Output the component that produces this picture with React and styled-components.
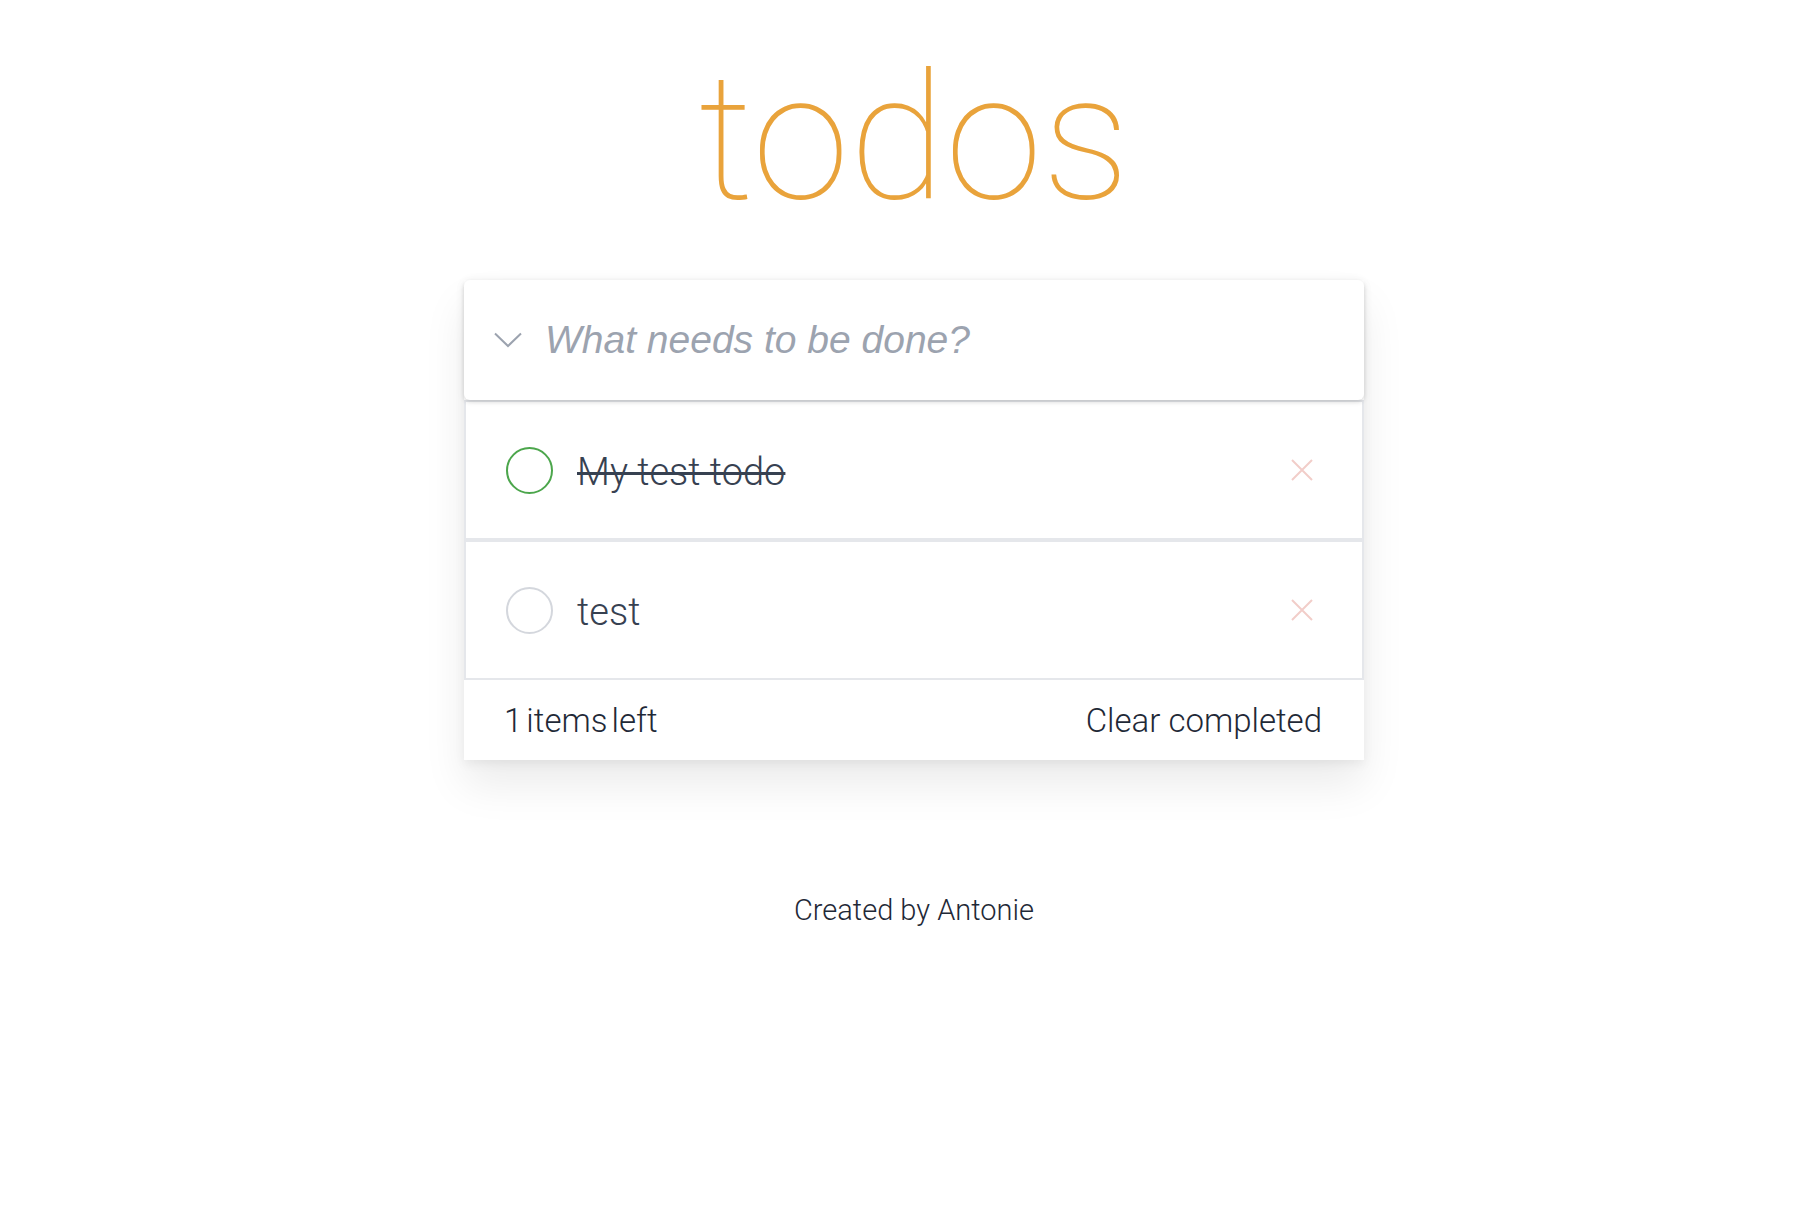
import React, { useState } from 'react';
import styled, { createGlobalStyle } from 'styled-components';

const GlobalStyle = createGlobalStyle`
  html, body {
    margin: 0;
    padding: 0;
    background: #ffffff;
  }

  body {
    font-family: Roboto, "Liberation Sans", sans-serif;
    font-weight: 300;
    color: #374151;
  }
`;

const Page = styled.div`
  display: flex;
  flex-direction: column;
  align-items: center;
  padding-left: 24px;
`;

const Title = styled.h1`
  margin: 50px 0 0;
  font-size: 176px;
  line-height: 1;
  font-weight: 100;
  color: #e9a33b;
`;

const Card = styled.section`
  width: 900px;
  margin-top: 54px;
  box-shadow: 0 4px 10px rgba(0, 0, 0, 0.06), 0 25px 40px rgba(0, 0, 0, 0.08);
`;

const Header = styled.div`
  position: relative;
  z-index: 1;
  display: flex;
  align-items: center;
  height: 120px;
  padding: 0 0 0 30px;
  background: #fff;
  border-radius: 6px;
  box-shadow: 0 2px 4px rgba(0, 0, 0, 0.14), 0 0 12px rgba(0, 0, 0, 0.04);
`;

const ToggleAll = styled.button`
  display: flex;
  align-items: center;
  padding: 0;
  margin-right: 21px;
  background: none;
  border: none;
  cursor: pointer;
`;

const NewTodo = styled.input`
  flex: 1;
  border: none;
  outline: none;
  background: transparent;
  font-family: "Liberation Sans", Arial, sans-serif;
  font-size: 39px;
  font-style: italic;
  font-weight: 400;
  color: #374151;

  &::placeholder {
    color: #9ca3af;
  }
`;

const List = styled.ul`
  list-style: none;
  margin: 0;
  padding: 0;
`;

const Item = styled.li`
  display: flex;
  align-items: center;
  box-sizing: border-box;
  height: 140px;
  padding: 0 49px 0 40px;
  background: #fff;
  border: 2px solid #e5e7eb;
`;

const Check = styled.button`
  box-sizing: border-box;
  width: 47px;
  height: 47px;
  padding: 0;
  border-radius: 50%;
  border: 2px solid ${(p) => (p.$done ? '#4ca64c' : '#d4d7dd')};
  background: #fff;
  cursor: pointer;
  flex-shrink: 0;
`;

const Label = styled.span`
  flex: 1;
  margin-left: 24px;
  padding-top: 4px;
  font-size: 38px;
  font-weight: 300;
  color: #374151;
  text-decoration: ${(p) => (p.$done ? 'line-through' : 'none')};
  text-decoration-thickness: 3px;
`;

const Destroy = styled.button`
  display: flex;
  padding: 0;
  background: none;
  border: none;
  cursor: pointer;
`;

const Footer = styled.footer`
  display: flex;
  align-items: center;
  justify-content: space-between;
  height: 80px;
  padding: 0 42px 0 40px;
  background: #fff;
  font-size: 33px;
  color: #1f2937;
`;

const Count = styled.span`
  word-spacing: -4px;
`;

const ClearButton = styled.button`
  padding: 0;
  background: none;
  border: none;
  font-family: inherit;
  font-size: inherit;
  font-weight: 300;
  color: inherit;
  cursor: pointer;
`;

const Credit = styled.p`
  margin: 133px 0 0;
  font-size: 29px;
  line-height: 1.2;
  color: #1f2937;
`;

const Chevron = () => (
  <svg width="28" height="16" viewBox="0 0 28 16" fill="none">
    <polyline points="1,1.5 14,14 27,1.5" stroke="#9ca3af" strokeWidth="2" />
  </svg>
);

const Cross = () => (
  <svg width="22" height="22" viewBox="0 0 22 22" fill="none">
    <path d="M1 1 L21 21 M21 1 L1 21" stroke="#f2cdc9" strokeWidth="2" />
  </svg>
);

const App = () => {
  const [todos, setTodos] = useState([
    { id: 1, text: 'My test todo', done: true },
    { id: 2, text: 'test', done: false },
  ]);
  const [draft, setDraft] = useState('');

  const toggle = (id) =>
    setTodos(todos.map((t) => (t.id === id ? { ...t, done: !t.done } : t)));
  const remove = (id) => setTodos(todos.filter((t) => t.id !== id));
  const left = todos.filter((t) => !t.done).length;

  return (
    <>
      <GlobalStyle />
      <Page>
        <Title>todos</Title>
        <Card>
          <Header>
            <ToggleAll aria-label="Toggle all">
              <Chevron />
            </ToggleAll>
            <NewTodo
              placeholder="What needs to be done?"
              value={draft}
              onChange={(e) => setDraft(e.target.value)}
            />
          </Header>
          <List>
            {todos.map((todo) => (
              <Item key={todo.id}>
                <Check $done={todo.done} onClick={() => toggle(todo.id)} />
                <Label $done={todo.done}>{todo.text}</Label>
                <Destroy onClick={() => remove(todo.id)}>
                  <Cross />
                </Destroy>
              </Item>
            ))}
          </List>
          <Footer>
            <Count>{left} items left</Count>
            <ClearButton onClick={() => setTodos(todos.filter((t) => !t.done))}>
              Clear completed
            </ClearButton>
          </Footer>
        </Card>
        <Credit>Created by Antonie</Credit>
      </Page>
    </>
  );
};

export default App;
